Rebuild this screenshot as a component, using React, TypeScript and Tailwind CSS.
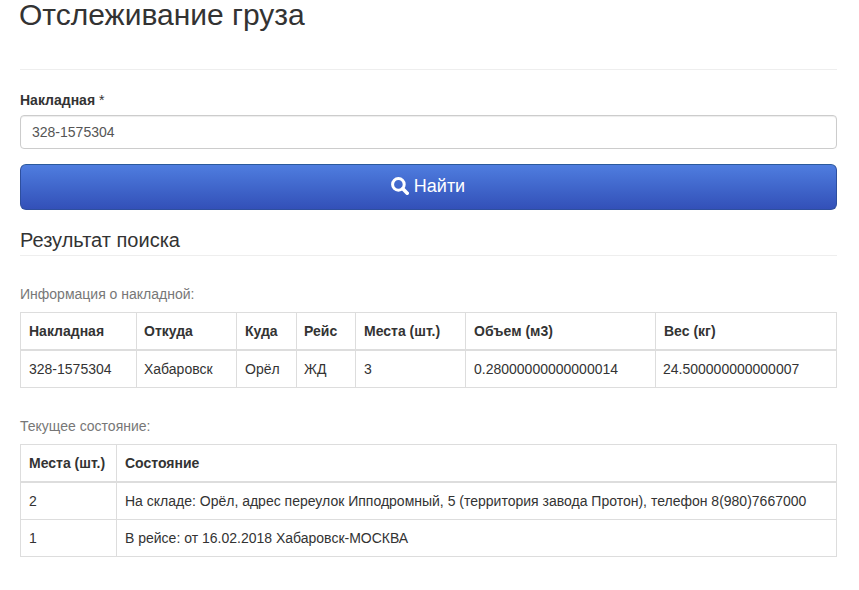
import React from "react"

const thCls = "border border-[#ddd] border-b-2 px-2 py-2 text-left align-bottom font-bold text-[#333] leading-[20px]"
const tdCls = "border border-[#ddd] px-2 py-2 align-top text-[#333] leading-[20px]"

function SearchIcon() {
    return (
        <svg viewBox="0 0 18 18" className="w-[18px] h-[18px] shrink-0 -ml-[1px] -mt-[2px]" aria-hidden="true">
            <circle cx="7.4" cy="7.4" r="5.8" fill="none" stroke="#fff" strokeWidth="3" />
            <path d="M11.8 11.8 L16.2 16.2" stroke="#fff" strokeWidth="3.6" strokeLinecap="round" />
        </svg>
    )
}

export default function App() {
    return (
        <div className="font-['Liberation_Sans',Arial,sans-serif] text-[14px] text-[#333] bg-white h-[590px] overflow-hidden">
            <div className="w-[817px] ml-5">
                <h1 className="text-[30px] leading-[29px] font-normal text-[#333] -ml-[1px]">Отслеживание груза</h1>

                <hr className="mt-[40px] border-0 border-t border-[#eee]" />

                <form className="mt-[20px]">
                    <label className="block font-bold leading-[20px] mb-[5px]">
                        Накладная <span className="font-normal">*</span>
                    </label>
                    <input
                        readOnly
                        value="328-1575304"
                        className="block w-full h-[34px] px-[11px] border border-[#ccc] rounded text-[#555] text-[14px] bg-white shadow-[inset_0_1px_1px_rgba(0,0,0,0.075)] outline-none"
                    />
                    <button
                        type="button"
                        className="mt-[15px] flex items-center justify-center gap-[5px] w-full h-[46px] pb-[1px] rounded-md border border-[#2e4f9e] border-t-[#2b5a9c] bg-gradient-to-b from-[#4f7ddf] to-[#3350b8] text-white text-[18px]"
                    >
                        <SearchIcon />
                        Найти
                    </button>
                </form>

                <h3 className="mt-[19px] text-[20px] leading-[22px] font-normal text-[#333] pb-[4px] border-b border-[#eee]">
                    Результат поиска
                </h3>

                <p className="mt-[28px] text-[#777] leading-[20px]">Информация о накладной:</p>
                <table className="mt-[8px] w-full table-fixed border-collapse">
                    <colgroup>
                        <col className="w-[116px]" />
                        <col className="w-[100px]" />
                        <col className="w-[60px]" />
                        <col className="w-[59px]" />
                        <col className="w-[110px]" />
                        <col className="w-[190px]" />
                        <col />
                    </colgroup>
                    <thead>
                        <tr>
                            <th className={thCls}>Накладная</th>
                            <th className={`${thCls} !pl-[7px]`}>Откуда</th>
                            <th className={thCls}>Куда</th>
                            <th className={`${thCls} !pl-[7px]`}>Рейс</th>
                            <th className={thCls}>Места (шт.)</th>
                            <th className={thCls}>Объем (м3)</th>
                            <th className={thCls}>Вес (кг)</th>
                        </tr>
                    </thead>
                    <tbody>
                        <tr>
                            <td className={tdCls}>328-1575304</td>
                            <td className={`${tdCls} !pl-[7px]`}>Хабаровск</td>
                            <td className={tdCls}>Орёл</td>
                            <td className={`${tdCls} !pl-[7px]`}>ЖД</td>
                            <td className={tdCls}>3</td>
                            <td className={tdCls}>0.28000000000000014</td>
                            <td className={`${tdCls} !pl-[7px]`}>24.500000000000007</td>
                        </tr>
                    </tbody>
                </table>

                <p className="mt-[28px] text-[#777] leading-[20px]">Текущее состояние:</p>
                <table className="mt-[8px] w-full table-fixed border-collapse">
                    <colgroup>
                        <col className="w-[96px]" />
                        <col />
                    </colgroup>
                    <thead>
                        <tr>
                            <th className={thCls}>Места (шт.)</th>
                            <th className={thCls}>Состояние</th>
                        </tr>
                    </thead>
                    <tbody>
                        <tr>
                            <td className={tdCls}>2</td>
                            <td className={tdCls}>На складе: Орёл, адрес переулок Ипподромный, 5 (территория завода Протон), телефон 8(980)7667000</td>
                        </tr>
                        <tr>
                            <td className={tdCls}>1</td>
                            <td className={tdCls}>В рейсе: от 16.02.2018 Хабаровск-МОСКВА</td>
                        </tr>
                    </tbody>
                </table>
            </div>
        </div>
    )
}
